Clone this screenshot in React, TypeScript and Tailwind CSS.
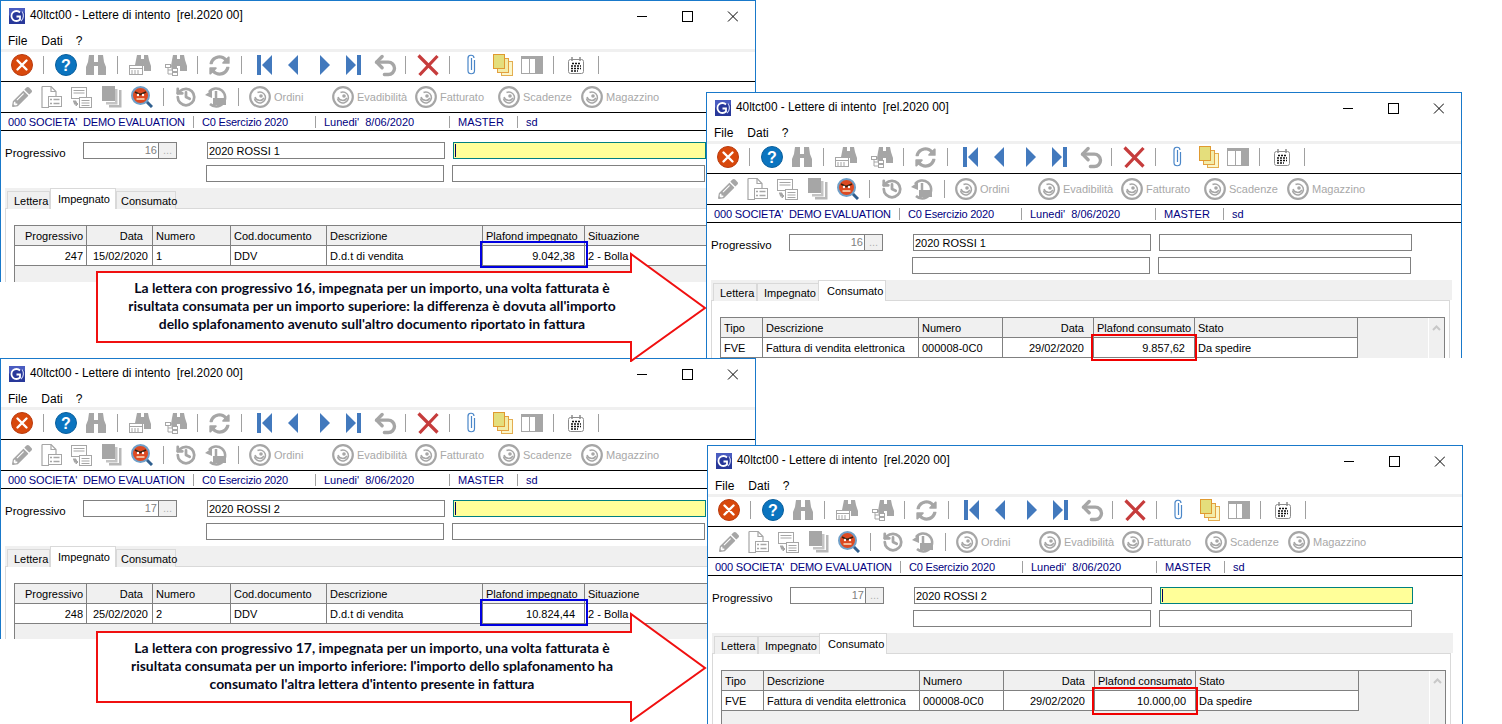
import { FaSyncAlt, FaPencilAlt } from 'react-icons/fa';
import { History, Undo2 } from 'lucide-react';

const GRAY = '#a6a6a6';

function Sep({ className }: { className: string }) {
  return <span className={`h-[18px] w-px shrink-0 bg-[#a0a0a0] ${className}`} />;
}

function Logo() {
  return (
    <svg width="16" height="16" viewBox="0 0 16 16" className="ml-[8px] shrink-0">
      <rect width="16" height="16" fill="#28389a" />
      <path d="M0 0h16v5C10 2 4 3 0 8z" fill="#4a5cc0" />
      <path d="M11 4.500A5 5 0 1 0 11 11.500V8.500H7.500" fill="none" stroke="#fff" strokeWidth="1.800" />
      <path d="M13 3.500A7 7 0 0 1 12 13" fill="none" stroke="#c9d2f5" strokeWidth="1.200" />
    </svg>
  );
}

function Binoculars({ className = '' }: { className?: string }) {
  return (
    <svg width="22" height="22" viewBox="0 0 22 22" className={`shrink-0 ${className}`}>
      <path d="M4 1h5v7h4V1h5l1 7 2 5v8h-8V12h-4v9H1v-8l2-5z" fill={GRAY} />
    </svg>
  );
}

function BinocularsForm({ className }: { className: string }) {
  return (
    <svg width="22" height="22" viewBox="0 0 22 22" className={`shrink-0 ${className}`}>
      <path d="M8 1h4v4h3V1h4l1 5 2 6v5h-7v-5h-1v-1H6l1-5z" fill={GRAY} />
      <rect x="0.500" y="11.500" width="13" height="9" fill="#fff" stroke={GRAY} />
      <path d="M0 14.500h13" stroke={GRAY} />
      <path d="M2 17h9M2 19h9" stroke={GRAY} strokeDasharray="2 1" />
    </svg>
  );
}

function BinocularsTree({ className }: { className: string }) {
  return (
    <svg width="22" height="22" viewBox="0 0 22 22" className={`shrink-0 ${className}`}>
      <path d="M8 1h4v4h3V1h4l1 5 2 6v5h-7v-5h-3v5H7l-1-5 1-6z" fill={GRAY} />
      <rect x="0.500" y="10.500" width="5" height="3" fill="#fff" stroke={GRAY} />
      <rect x="7.500" y="14.500" width="5" height="3" fill="#fff" stroke={GRAY} />
      <rect x="7.500" y="18.500" width="5" height="3" fill="#fff" stroke={GRAY} />
      <path d="M3 14v6h4M3 16h4" fill="none" stroke={GRAY} />
    </svg>
  );
}

function Nav({ kind, className }: { kind: 'first' | 'prev' | 'next' | 'last'; className: string }) {
  const wide = kind === 'first' || kind === 'last';
  return (
    <svg width={wide ? 15 : 10} height="20" viewBox={wide ? '0 0 15 20' : '0 0 10 20'} className={`shrink-0 ${className}`} fill="#4279bd">
      {kind === 'first' && <path d="M0 0h4v20H0zM15 0v20L5 10z" />}
      {kind === 'prev' && <path d="M10 0v20L0 10z" />}
      {kind === 'next' && <path d="M0 0v20l10-10z" />}
      {kind === 'last' && <path d="M15 0h-4v20h4zM0 0v20l10-10z" />}
    </svg>
  );
}

function ToolbarTop() {
  return (
    <div className="flex h-[29px] items-center pb-[3px]">
      <svg width="22" height="22" viewBox="0 0 22 22" className="ml-[10px] shrink-0">
        <circle cx="11" cy="11" r="10.500" fill="#d8480c" stroke="#b93c10" />
        <path d="M6.500 6.500l9 9M15.500 6.500l-9 9" stroke="#fff" strokeWidth="2.400" strokeLinecap="round" />
      </svg>
      <Sep className="ml-[10px]" />
      <svg width="22" height="22" viewBox="0 0 22 22" className="ml-[11px] shrink-0">
        <circle cx="11" cy="11" r="10.500" fill="#0b74bf" stroke="#0a5f9c" />
        <text x="11" y="16.500" textAnchor="middle" fontSize="16" fontWeight="700" fontFamily="'Liberation Sans', sans-serif" fill="#fff">?</text>
      </svg>
      <Binoculars className="ml-[8px]" />
      <Sep className="ml-[10px]" />
      <BinocularsForm className="ml-[11px]" />
      <BinocularsTree className="ml-[14px]" />
      <Sep className="ml-[10px]" />
      <FaSyncAlt size={21} color={GRAY} className="ml-[11px] shrink-0" />
      <Sep className="ml-[11px]" />
      <Nav kind="first" className="ml-[15px]" />
      <Nav kind="prev" className="ml-[16px]" />
      <Nav kind="next" className="ml-[22px]" />
      <Nav kind="last" className="ml-[16px]" />
      <Undo2 size={27} color={GRAY} strokeWidth={3} className="ml-[11px] shrink-0" />
      <Sep className="ml-[6px]" />
      <svg width="22" height="22" viewBox="0 0 22 22" className="ml-[11px] shrink-0">
        <path d="M1.500 1.500l19 19M20.500 2l-18 19" stroke="#c63c3c" strokeWidth="3.200" />
      </svg>
      <Sep className="ml-[10px]" />
      <svg width="11" height="22" viewBox="0 0 11 22" className="ml-[16px] shrink-0">
        <path d="M8.500 6v10.500a3.200 3.200 0 0 1-6.500 0V4.500a3 3 0 0 1 6-.5" fill="none" stroke="#4a86c8" strokeWidth="1.200" />
        <path d="M5.500 4v12" stroke="#4a86c8" strokeWidth="1.200" />
      </svg>
      <svg width="20" height="22" viewBox="0 0 20 22" className="ml-[16px] shrink-0">
        <rect x="8.500" y="7.500" width="11" height="14" fill="#fbf6c8" stroke="#e3ad50" />
        <rect x="4.500" y="4.500" width="11" height="14" fill="#f3eca8" stroke="#e3a040" />
        <rect x="0.500" y="0.500" width="11" height="14" fill="#e4de7c" stroke="#e09a30" />
      </svg>
      <svg width="22" height="18" viewBox="0 0 22 18" className="ml-[8px] shrink-0">
        <rect width="22" height="18" fill={GRAY} />
        <rect x="1" y="3" width="7" height="14" fill="#fff" />
        <rect x="9" y="3" width="5" height="14" fill="#fff" />
      </svg>
      <Sep className="ml-[10px]" />
      <svg width="16" height="17" viewBox="0 0 16 17" className="ml-[14px] shrink-0">
        <rect x="0.500" y="2.500" width="15" height="14" rx="2" fill="#fff" stroke="#8c8c8c" />
        <path d="M4 0v4M12 0v4" stroke="#8c8c8c" strokeWidth="1.500" />
        <path d="M4 6.500h9M3 9h10M3 11.500h10M3 14h7" stroke="#111" strokeWidth="1.600" strokeDasharray="2 1" />
      </svg>
      <Sep className="ml-[14px]" />
    </div>
  );
}

function Swirl() {
  return (
    <svg width="22" height="22" viewBox="0 0 22 22" className="shrink-0">
      <circle cx="11" cy="11" r="9.800" fill="none" stroke={GRAY} strokeWidth="2.200" />
      <path d="M5.500 12.500a5.500 5.500 0 1 0 3-6" fill="none" stroke={GRAY} strokeWidth="1.500" />
      <path d="M6 11a5 5 0 0 0 9 1" fill="none" stroke={GRAY} strokeWidth="1.500" />
      <circle cx="12" cy="10" r="1.800" fill={GRAY} />
    </svg>
  );
}

function LabelTool({ label, className = '' }: { label: string; className?: string }) {
  return (
    <div className={`flex w-[83px] shrink-0 items-center ${className}`}>
      <Swirl />
      <span className="ml-[3px] text-[#a8a8a8]">{label}</span>
    </div>
  );
}

function ToolbarBottom() {
  return (
    <div className="flex h-[30px] items-center">
      <FaPencilAlt size={20} color={GRAY} className="ml-[11px] shrink-0" />
      <svg width="21" height="22" viewBox="0 0 21 22" className="ml-[9px] shrink-0">
        <path d="M1 .500h9l5 5V10M1 .500v21h7" fill="none" stroke={GRAY} strokeWidth="1.200" />
        <path d="M10 .500v5h5" fill="none" stroke={GRAY} strokeWidth="1.200" />
        <rect x="7.500" y="10.500" width="13" height="10" fill="#fff" stroke={GRAY} />
        <path d="M9 13.500h2M12.500 13.500h6M9 17.500h2M12.500 17.500h6" stroke={GRAY} strokeWidth="1.500" />
      </svg>
      <svg width="21" height="21" viewBox="0 0 21 21" className="ml-[9px] shrink-0">
        <rect x="0.500" y="0.500" width="15" height="11" fill="#fff" stroke={GRAY} />
        <path d="M2.500 3.500h11M2.500 6h11" stroke={GRAY} />
        <rect x="8.500" y="10.500" width="12" height="10" fill="#fff" stroke={GRAY} />
        <path d="M10.500 13.500h8M10.500 16h8M10.500 18.500h8" stroke={GRAY} />
        <path d="M2 14h3v3H3M7 17l-2-2v4z" fill={GRAY} stroke={GRAY} />
      </svg>
      <svg width="20" height="22" viewBox="0 0 20 22" className="ml-[10px] shrink-0">
        <path d="M17 4h2.500v17.500H7V19h10z" fill="#b8b8b8" />
        <path d="M13 3h2.500v15.500H4V16h9z" fill="#c4c4c4" />
        <rect width="13" height="15" fill={GRAY} />
      </svg>
      <svg width="22" height="22" viewBox="0 0 22 22" className="ml-[9px] shrink-0">
        <path d="M15 15l6 6" stroke="#2f5f8f" strokeWidth="3" />
        <circle cx="9.500" cy="9.500" r="8.500" fill="#dd4a22" stroke="#6f9fc8" strokeWidth="2" />
        <path d="M4 6l5 2.500L15 6" fill="none" stroke="#3a2010" strokeWidth="1.600" />
        <circle cx="7" cy="9" r="1.200" fill="#fff" />
        <circle cx="12" cy="9" r="1.200" fill="#fff" />
        <path d="M5.500 13h8" stroke="#fbe0c0" strokeWidth="1.500" />
      </svg>
      <Sep className="ml-[10px]" />
      <History size={22} color={GRAY} strokeWidth={3} className="ml-[11px] shrink-0" />
      <svg width="22" height="22" viewBox="0 0 22 22" className="ml-[8px] shrink-0">
        <path d="M4 6a9 9 0 1 1 1 12" fill="none" stroke={GRAY} strokeWidth="2.500" />
        <path d="M0 9l7-5v8z" fill={GRAY} />
        <path d="M11 5v7" stroke={GRAY} strokeWidth="2.500" />
        <rect x="8" y="12" width="13" height="7" fill={GRAY} />
      </svg>
      <Sep className="ml-[11px]" />
      <LabelTool label="Ordini" className="ml-[10px]" />
      <LabelTool label="Evadibilità" />
      <LabelTool label="Fatturato" />
      <LabelTool label="Scadenze" />
      <LabelTool label="Magazzino" />
    </div>
  );
}

function StatusBar() {
  return (
    <div className="flex h-[18px] items-center border-t border-black pt-px text-[#000080]">
      <span className="ml-[7px] w-[185px] shrink-0 whitespace-pre tracking-[-0.15px]">000 SOCIETA'  DEMO EVALUATION</span>
      <span className="h-[12px] w-px shrink-0 bg-[#a0a0a0]" />
      <span className="ml-[8px] w-[113px] shrink-0 tracking-[-0.2px]">C0 Esercizio 2020</span>
      <span className="h-[12px] w-px shrink-0 bg-[#a0a0a0]" />
      <span className="ml-[8px] w-[125px] shrink-0 whitespace-pre">Lunedi'  8/06/2020</span>
      <span className="h-[12px] w-px shrink-0 bg-[#a0a0a0]" />
      <span className="ml-[8px] w-[59px] shrink-0">MASTER</span>
      <span className="h-[12px] w-px shrink-0 bg-[#a0a0a0]" />
      <span className="ml-[8px]">sd</span>
    </div>
  );
}

function Field({ className, children }: { className: string; children?: React.ReactNode }) {
  return <div className={`flex h-[17px] shrink-0 items-center border px-px ${className}`}>{children}</div>;
}

interface Column {
  width: string;
  head: string;
  headClass?: string;
  cellClass?: string;
}

const IMPEGNATO_COLS: Column[] = [
  { width: 'w-[72px]', head: 'Progressivo', headClass: 'text-right', cellClass: 'text-right' },
  { width: 'w-[66px]', head: 'Data', headClass: 'pr-[9px] text-right', cellClass: 'pr-[4px] text-right' },
  { width: 'w-[78px]', head: 'Numero' },
  { width: 'w-[96px]', head: 'Cod.documento' },
  { width: 'w-[156px]', head: 'Descrizione' },
  { width: 'w-[102px]', head: 'Plafond impegnato', cellClass: 'pr-[9px] text-right' },
  { width: 'w-[155px]', head: 'Situazione' },
];

const CONSUMATO_COLS: Column[] = [
  { width: 'w-[42px]', head: 'Tipo' },
  { width: 'w-[156px]', head: 'Descrizione' },
  { width: 'w-[84px]', head: 'Numero' },
  { width: 'w-[91px]', head: 'Data', headClass: 'pr-[9px] text-right', cellClass: 'pr-[9px] text-right' },
  { width: 'w-[101px]', head: 'Plafond consumato', cellClass: 'pr-[9px] text-right' },
  { width: 'w-[163px]', head: 'Stato' },
];

function Grid({ columns, cells, scrollbar }: { columns: Column[]; cells: string[]; scrollbar: boolean }) {
  return (
    <div className="ml-[8px] mt-[16px] flex h-[100px] w-[725px] border-x border-t border-[#808080] bg-[#f0f0f0]">
      <div className="flex-1">
        <div className="flex h-[20px]">
          {columns.map((c) => (
            <div key={c.head} className={`shrink-0 whitespace-nowrap border-r border-b border-[#808080] px-[3px] leading-[20px] ${c.width} ${c.headClass ?? ''}`}>
              {c.head}
            </div>
          ))}
        </div>
        <div className="flex h-[20px]">
          {columns.map((c, i) => (
            <div key={c.head} className={`shrink-0 whitespace-nowrap border-r border-b border-[#808080] bg-white px-[3px] leading-[20px] ${c.width} ${c.cellClass ?? ''}`}>
              {cells[i]}
            </div>
          ))}
        </div>
      </div>
      {scrollbar && (
        <div className="flex w-[16px] shrink-0 justify-center border-l border-white pt-[7px]">
          <svg width="9" height="6" viewBox="0 0 9 6">
            <path d="M1 5l3.500-3.500L8 5" fill="none" stroke="#c8c8c8" strokeWidth="2" />
          </svg>
        </div>
      )}
    </div>
  );
}

function Tabs({ impegnato }: { impegnato: boolean }) {
  const idle = 'mt-[3px] h-[18px] border-x border-t border-[#d9d9d9] bg-[#f0f0f0] leading-[19px]';
  const live = 'relative z-10 h-[21px] border-x border-t border-[#d9d9d9] bg-white leading-[20px]';
  return (
    <div className="ml-[4px] flex h-[20px] w-[741px] bg-[#f0f0f0] pl-[2px]">
      {impegnato ? (
        <>
          <div className={`w-[43px] pl-[6px] ${idle}`}>Lettera</div>
          <div className={`w-[66px] pl-[7px] ${live}`}>Impegnato</div>
          <div className={`w-[60px] pl-[4px] ${idle}`}>Consumato</div>
        </>
      ) : (
        <>
          <div className={`w-[44px] pl-[6px] ${idle}`}>Lettera</div>
          <div className={`w-[62px] pl-[6px] ${idle}`}>Impegnato</div>
          <div className={`-ml-px w-[68px] pl-[8px] ${live}`}>Consumato</div>
        </>
      )}
    </div>
  );
}

interface WindowProps {
  className: string;
  num: string;
  name: string;
  yellow: boolean;
  impegnato: boolean;
  cells: string[];
}

function AppWindow({ className, num, name, yellow, impegnato, cells }: WindowProps) {
  return (
    <div className={`absolute w-[756px] overflow-hidden border-x border-t border-[#1979ca] bg-white font-['Liberation_Sans',sans-serif] text-[11px] text-black ${className}`}>
      <div className="flex h-[29px] items-center whitespace-pre pt-[1px] text-[11.850px]">
        <Logo />
        <span className="ml-[5px]">40ltct00 - Lettere di intento  [rel.2020 00]</span>
        <svg width="101" height="11" viewBox="0 0 101 11" className="ml-auto mr-[17px] shrink-0" fill="none" stroke="#000">
          <path d="M0 5.500h10" />
          <rect x="45.500" y="0.500" width="10" height="10" />
          <path d="M91 .500l10 10M101 .500l-10 10" />
        </svg>
      </div>
      <div className="flex h-[19px] items-center pt-[2px] text-[12px]">
        <span className="ml-[7px]">File</span>
        <span className="ml-[14px]">Dati</span>
        <span className="ml-[13px]">?</span>
      </div>
      <div className="h-[3px] bg-[#f0f0f0]" />
      <ToolbarTop />
      <div className="border-t border-black" />
      <ToolbarBottom />
      <StatusBar />
      <div className="border-t border-black" />

      <div className="mt-[11px] flex items-start">
        <span className="ml-[4px] h-[17px] w-[78px] shrink-0 pt-[3px] text-[11.500px] leading-[17px]">Progressivo</span>
        <Field className="w-[76px] justify-end border-[#808080] bg-white text-[#808080]">{num}</Field>
        <Field className="-ml-px w-[19px] justify-center border-[#808080] bg-[#f0f0f0] text-[#b0b0b0]">...</Field>
        <Field className="ml-[30px] w-[238px] border-[#808080] bg-white pl-[1px] pt-px">{name}</Field>
        {yellow ? (
          <Field className="ml-[8px] w-[253px] border-[#008080] bg-[#ffff99] pl-[1px]">
            <span className="h-[13px] w-px bg-[#000060]" />
          </Field>
        ) : (
          <Field className="ml-[8px] w-[253px] border-[#808080] bg-white" />
        )}
      </div>
      <div className="mt-[6px] flex">
        <Field className="ml-[205px] w-[238px] border-[#808080] bg-white" />
        <Field className="ml-[8px] w-[253px] border-[#808080] bg-white" />
      </div>
      <div className="mt-[6px]">
        <Tabs impegnato={impegnato} />
        <div className="ml-[4px] h-[200px] w-[739px] border-x border-t border-[#d9d9d9] bg-white">
          {impegnato ? (
            <Grid columns={IMPEGNATO_COLS} cells={cells} scrollbar={false} />
          ) : (
            <Grid columns={CONSUMATO_COLS} cells={cells} scrollbar />
          )}
        </div>
      </div>
    </div>
  );
}

function Callout({ className, lines }: { className: string; lines: string[] }) {
  return (
    <div className={`absolute left-[95px] h-[110px] w-[612px] ${className}`}>
      <svg width="612" height="110" viewBox="0 0 612 110" className="absolute inset-0">
        <path d="M2 20h534V2l74 54-74 53V90H2z" fill="#fff" stroke="#f01010" strokeWidth="2" />
      </svg>
      <div className="absolute left-0 top-[18px] flex h-[71px] w-[554px] flex-col items-center justify-center font-['Lato',sans-serif] text-[13.900px] font-bold leading-[18px] text-[#06081a]">
        {lines.map((l) => (
          <div key={l} className="whitespace-pre">{l}</div>
        ))}
      </div>
    </div>
  );
}

export default function App() {
  return (
    <div className="relative h-[724px] w-[1502px] overflow-hidden bg-white">
      <AppWindow
        className="left-0 top-0 h-[282px]"
        num="16"
        name="2020 ROSSI 1"
        yellow
        impegnato
        cells={['247', '15/02/2020', '1', 'DDV', 'D.d.t di vendita', '9.042,38', '2 - Bolla']}
      />
      <AppWindow
        className="left-0 top-[358px] h-[281px]"
        num="17"
        name="2020 ROSSI 2"
        yellow
        impegnato
        cells={['248', '25/02/2020', '2', 'DDV', 'D.d.t di vendita', '10.824,44', '2 - Bolla']}
      />
      <AppWindow
        className="left-[706px] top-[92px] h-[266px]"
        num="16"
        name="2020 ROSSI 1"
        yellow={false}
        impegnato={false}
        cells={['FVE', 'Fattura di vendita elettronica', '000008-0C0', '29/02/2020', '9.857,62', 'Da spedire']}
      />
      <AppWindow
        className="left-[707px] top-[445px] h-[279px]"
        num="17"
        name="2020 ROSSI 2"
        yellow
        impegnato={false}
        cells={['FVE', 'Fattura di vendita elettronica', '000008-0C0', '29/02/2020', '10.000,00', 'Da spedire']}
      />
      <Callout
        className="top-[252px]"
        lines={[
          'La lettera con progressivo 16, impegnata per un importo, una volta fatturata è',
          "risultata consumata per un importo superiore: la differenza è dovuta all'importo",
          "dello splafonamento avenuto sull'altro documento riportato in fattura",
        ]}
      />
      <Callout
        className="top-[612px]"
        lines={[
          'La lettera con progressivo 17, impegnata per un importo, una volta fatturata è',
          "risultata consumata per un importo inferiore: l'importo dello splafonamento ha",
          "consumato l'altra lettera d'intento presente in fattura",
        ]}
      />
      <div className="absolute left-[480px] top-[241px] h-[27px] w-[108px] border-2 border-[#0000e0]" />
      <div className="absolute left-[480px] top-[599px] h-[27px] w-[108px] border-2 border-[#0000e0]" />
      <div className="absolute left-[1091px] top-[334px] h-[27px] w-[106px] border-2 border-[#f00000]" />
      <div className="absolute left-[1092px] top-[687px] h-[28px] w-[106px] border-2 border-[#f00000]" />
    </div>
  );
}
